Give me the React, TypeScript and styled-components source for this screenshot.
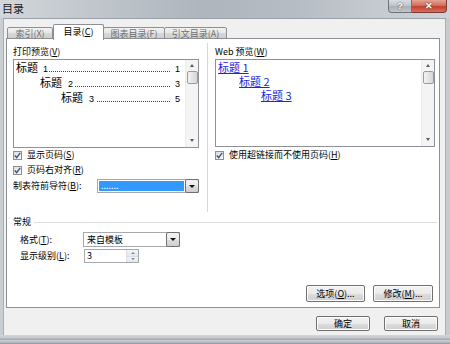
import React from 'react';
import styled, { createGlobalStyle } from 'styled-components';

const GlobalStyle = createGlobalStyle`
  html, body { margin: 0; padding: 0; background: #fff; }
  body {
    width: 450px; height: 344px; overflow: hidden;
    font-family: "Noto Sans CJK SC", "Liberation Sans", sans-serif;
    color: #000;
  }
  * { box-sizing: border-box; }
`;

const Window = styled.div`
  width: 450px;
  height: 344px;
  display: flex;
  flex-direction: column;
  background: linear-gradient(90deg, #c9ced3 0%, #bcc2c8 50%, #c6cbd0 100%);
`;

const TitleBar = styled.div`
  height: 18px;
  flex: none;
  display: flex;
  align-items: flex-start;
  padding-left: 2px;
  padding-right: 3px;
  background: linear-gradient(90deg, #d3d7db 0%, #c2c8ce 18%, #aeb5bc 45%, #b6bcc3 65%, #c6cbd1 85%, #cfd3d7 100%);
`;

const TitleText = styled.div`
  font-size: 11px;
  line-height: 17px;
  color: #1a1a1a;
`;

const CaptionButtons = styled.div`
  margin-left: auto;
  display: flex;
`;

const CaptionButton = styled.div<{ $close?: boolean }>`
  width: ${p => (p.$close ? 35 : 24)}px;
  height: 13px;
  display: flex;
  align-items: center;
  justify-content: center;
  border: 1px solid ${p => (p.$close ? '#7a3a33' : '#6c737b')};
  border-top: none;
  border-left-width: ${p => (p.$close ? 0 : 1)}px;
  border-radius: ${p => (p.$close ? '0 0 4px 0' : '0 0 0 4px')};
  background: ${p =>
    p.$close
      ? 'linear-gradient(180deg, #e4a493 0%, #d2705e 45%, #c2412d 55%, #d7705c 100%)'
      : 'linear-gradient(180deg, #d9dde1 0%, #c0c6cc 45%, #aab1b8 55%, #bfc5cb 100%)'};
  color: #fff;
  font-family: "Liberation Sans", sans-serif;
  font-weight: bold;
  font-size: 9px;
  line-height: 1;
  text-shadow: 0 0 2px #333;
`;

const Client = styled.div`
  margin-left: 3px;
  width: 443px;
  height: 317px;
  flex: none;
  background: #f0f0f0;
  border-top: 1px solid #9aa1a8;
  border-left: 1px solid #a8aeb4;
  border-right: 1px solid #a8aeb4;
  padding: 5px 7px 0 2px;
  display: flex;
  flex-direction: column;
`;

const BottomFrame = styled.div`
  flex: 1;
  background: linear-gradient(180deg, #d2d6da 0%, #c3c8cd 35%, #969da4 45%, #c9cdd2 60%, #b9bfc5 80%, #8d949b 100%);
`;

const TabStrip = styled.div`
  display: flex;
  align-items: flex-end;
  height: 15px;
  padding-left: 1px;
  position: relative;
  z-index: 1;
`;

const Tab = styled.div<{ $active?: boolean; $w: number }>`
  width: ${p => p.$w}px;
  height: ${p => (p.$active ? 16 : 12)}px;
  margin-bottom: ${p => (p.$active ? -1 : 0)}px;
  border: 1px solid #8c8f96;
  border-bottom: ${p => (p.$active ? 'none' : '1px solid #8c8f96')};
  margin-left: ${p => (p.$active ? 0 : -1)}px;
  border-radius: 2px 2px 0 0;
  background: ${p => (p.$active ? '#ffffff' : 'linear-gradient(180deg, #f2f2f2 0%, #e6e6e6 50%, #d8d8d8 51%, #cfcfcf 100%)')};
  color: ${p => (p.$active ? '#000' : '#6f6f6f')};
  font-size: 9px;
  line-height: ${p => (p.$active ? 14 : 11)}px;
  text-align: center;
  white-space: nowrap;
  &:first-child { margin-left: 0; }
`;

const Panel = styled.div`
  width: 434px;
  height: 270px;
  margin-top: -1px;
  border: 1px solid #8c8f96;
  background: #ffffff;
  padding: 7px 4px 5px 6px;
  display: flex;
  flex-direction: column;
`;

const TopSection = styled.div`
  height: 166px;
  display: flex;
  flex: none;
`;

const Column = styled.div<{ $w: number }>`
  width: ${p => p.$w}px;
  display: flex;
  flex-direction: column;
`;

const VSeparator = styled.div`
  width: 1px;
  margin: -3px 7px 0 8px;
  background: #d8d8d8;
`;

const Label = styled.div`
  height: 13px;
  font-size: 9px;
  line-height: 12px;
  white-space: nowrap;
`;

const Mn = styled.span`
  text-decoration: underline;
`;

const PreviewBox = styled.div<{ $h: number }>`
  height: ${p => p.$h}px;
  border: 1px solid #8e9298;
  background: #fff;
  display: flex;
  flex: none;
`;

const PreviewContent = styled.div<{ $pr: number }>`
  flex: 1;
  min-width: 0;
  padding: 0 ${p => p.$pr}px 0 1px;
`;

const PrintLine = styled.div<{ $indent: number }>`
  height: 15px;
  display: flex;
  align-items: baseline;
  padding-left: ${p => p.$indent}px;
  font-size: 11px;
  line-height: 15px;
  white-space: nowrap;
`;

const Small = styled.span<{ $gap?: number }>`
  font-family: "Liberation Sans", sans-serif;
  font-size: 9px;
  flex: none;
  margin-left: ${p => p.$gap ?? 0}px;
`;

const Leader = styled.span<{ $gap: number }>`
  flex: 1 1 0;
  min-width: 0;
  height: 1px;
  margin-left: ${p => p.$gap}px;
  margin-right: 4px;
  background-image: linear-gradient(90deg, #444 1px, transparent 1px);
  background-size: 2px 1px;
  background-repeat: repeat-x;
`;

const WebLine = styled.div<{ $indent: number }>`
  height: 14px;
  padding-left: ${p => p.$indent}px;
  font-size: 11px;
  line-height: 14px;
  white-space: nowrap;
`;

const Link = styled.span`
  color: #2424dc;
  text-decoration: underline;
`;

const Scrollbar = styled.div`
  width: 13px;
  flex: none;
  background: #f4f4f4;
  border-left: 1px solid #ececec;
  display: flex;
  flex-direction: column;
  align-items: center;
  padding: 4px 0 5px;
`;

const Arrow = styled.div<{ $down?: boolean }>`
  width: 0; height: 0;
  border-left: 2.5px solid transparent;
  border-right: 2.5px solid transparent;
  ${p => (p.$down ? 'border-top: 3px solid #5a5a5a;' : 'border-bottom: 3px solid #5a5a5a;')}
  ${p => (p.$down ? 'margin-top: auto;' : '')}
`;

const Thumb = styled.div`
  width: 11px;
  height: 13px;
  margin-top: 4px;
  border: 1px solid #9b9b9b;
  border-radius: 2px;
  background: linear-gradient(90deg, #f3f3f3 0%, #e4e4e4 50%, #d6d6d6 100%);
`;

const CheckRow = styled.div<{ $mt: number }>`
  height: 12px;
  margin-top: ${p => p.$mt}px;
  display: flex;
  align-items: center;
  font-size: 9px;
  line-height: 12px;
  white-space: nowrap;
  flex: none;
`;

const CheckBox = styled.span`
  width: 9px;
  height: 9px;
  margin-right: 5px;
  border: 1px solid #8f8f8f;
  background: linear-gradient(135deg, #dedede 0%, #f8f8f8 100%);
  display: flex;
  align-items: center;
  justify-content: center;
  flex: none;
`;

const FieldRow = styled.div<{ $mt: number; $h: number; $indent?: number }>`
  height: ${p => p.$h}px;
  margin-top: ${p => p.$mt}px;
  padding-left: ${p => p.$indent ?? 0}px;
  display: flex;
  align-items: center;
  flex: none;
`;

const FieldLabel = styled.div<{ $w: number }>`
  width: ${p => p.$w}px;
  font-size: 9px;
  line-height: 12px;
  white-space: nowrap;
  flex: none;
`;

const Combo = styled.div<{ $w: number }>`
  width: ${p => p.$w}px;
  height: 100%;
  border: 1px solid #a5a9ae;
  background: #fff;
  display: flex;
  padding: 1px 0 1px 1px;
`;

const ComboValue = styled.div<{ $selected?: boolean }>`
  flex: 1;
  display: flex;
  align-items: center;
  background: ${p => (p.$selected ? '#3399ff' : 'transparent')};
  color: ${p => (p.$selected ? '#fff' : '#000')};
  font-size: 9px;
  line-height: 10px;
  padding-left: 2px;
  white-space: nowrap;
`;

const DropButton = styled.div`
  width: 14px;
  margin: -2px -1px -2px 1px;
  border: 1px solid #707070;
  border-radius: 2px;
  background: linear-gradient(180deg, #f2f2f2 0%, #ebebeb 50%, #dddddd 51%, #cfcfcf 100%);
  display: flex;
  align-items: center;
  justify-content: center;
`;

const DropArrow = styled.div`
  width: 0; height: 0;
  border-left: 3px solid transparent;
  border-right: 3px solid transparent;
  border-top: 3px solid #111;
`;

const Spin = styled.div<{ $w: number }>`
  width: ${p => p.$w}px;
  height: 100%;
  border: 1px solid #a5a9ae;
  background: #fff;
  display: flex;
`;

const SpinValue = styled.div`
  flex: 1;
  font-size: 9px;
  line-height: 12px;
  padding-left: 2px;
`;

const SpinButtons = styled.div`
  width: 12px;
  display: flex;
  flex-direction: column;
  border-left: 1px solid #d8dde3;
`;

const SpinHalf = styled.div<{ $down?: boolean }>`
  flex: 1;
  display: flex;
  align-items: center;
  justify-content: center;
  background: linear-gradient(180deg, #f3f5f8 0%, #e3e8ee 100%);
  border-bottom: ${p => (p.$down ? 'none' : '1px solid #d6dbe1')};
`;

const SpinArrow = styled.div<{ $down?: boolean }>`
  width: 0; height: 0;
  border-left: 2.5px solid transparent;
  border-right: 2.5px solid transparent;
  ${p => (p.$down ? 'border-top: 2.5px solid #7d8a99;' : 'border-bottom: 2.5px solid #7d8a99;')}
`;

const GroupHeader = styled.div`
  height: 12px;
  margin-top: 4px;
  display: flex;
  align-items: center;
  font-size: 9px;
  line-height: 12px;
  flex: none;
`;

const GroupLine = styled.div`
  flex: 1;
  height: 1px;
  margin-left: 3px;
  margin-right: -2px;
  background: #dcdcdc;
`;

const ButtonRow = styled.div<{ $gap: number; $pr: number; $h: number }>`
  margin-top: auto;
  height: ${p => p.$h}px;
  display: flex;
  justify-content: flex-end;
  gap: ${p => p.$gap}px;
  padding-right: ${p => p.$pr}px;
  flex: none;
`;

const DialogButtons = styled(ButtonRow)`
  margin-top: 8px;
`;

const Button = styled.div<{ $w: number }>`
  width: ${p => p.$w}px;
  height: 100%;
  border: 1px solid #707070;
  border-radius: 2px;
  background: linear-gradient(180deg, #f2f2f2 0%, #ebebeb 50%, #dddddd 51%, #cfcfcf 100%);
  box-shadow: inset 0 0 0 1px #fcfcfc;
  display: flex;
  align-items: center;
  justify-content: center;
  font-size: 9px;
  line-height: 12px;
  white-space: nowrap;
`;

const Check = () => (
  <CheckBox>
    <svg width="7" height="7" viewBox="0 0 7 7">
      <path d="M0.8 3.6 L2.7 5.6 L6.2 0.9" fill="none" stroke="#3d5287" strokeWidth="1.4" />
    </svg>
  </CheckBox>
);

export default function App() {
  return (
    <>
      <GlobalStyle />
      <Window>
        <TitleBar>
          <TitleText>目录</TitleText>
          <CaptionButtons>
            <CaptionButton>?</CaptionButton>
            <CaptionButton $close>✕</CaptionButton>
          </CaptionButtons>
        </TitleBar>
        <Client>
          <TabStrip>
            <Tab $w={46}>索引(X)</Tab>
            <Tab $w={51} $active>目录(<Mn>C</Mn>)</Tab>
            <Tab $w={62}>图表目录(F)</Tab>
            <Tab $w={63}>引文目录(A)</Tab>
          </TabStrip>
          <Panel>
            <TopSection>
              <Column $w={186}>
                <Label>打印预览(<Mn>V</Mn>)</Label>
                <PreviewBox $h={89}>
                  <PreviewContent $pr={5}>
                    <PrintLine $indent={1}>
                      标题<Small $gap={5}>1</Small>
                      <Leader $gap={1} />
                      <Small>1</Small>
                    </PrintLine>
                    <PrintLine $indent={25}>
                      标题<Small $gap={6}>2</Small>
                      <Leader $gap={2} />
                      <Small>3</Small>
                    </PrintLine>
                    <PrintLine $indent={46}>
                      标题<Small $gap={6}>3</Small>
                      <Leader $gap={3} />
                      <Small>5</Small>
                    </PrintLine>
                  </PreviewContent>
                  <Scrollbar>
                    <Arrow />
                    <Thumb />
                    <Arrow $down />
                  </Scrollbar>
                </PreviewBox>
                <CheckRow $mt={1}>
                  <Check />显示页码(<Mn>S</Mn>)
                </CheckRow>
                <CheckRow $mt={3}>
                  <Check />页码右对齐(<Mn>R</Mn>)
                </CheckRow>
                <FieldRow $mt={3} $h={14}>
                  <FieldLabel $w={84}>制表符前导符(<Mn>B</Mn>):</FieldLabel>
                  <Combo $w={102}>
                    <ComboValue $selected>.......</ComboValue>
                    <DropButton><DropArrow /></DropButton>
                  </Combo>
                </FieldRow>
              </Column>
              <VSeparator />
              <Column $w={220}>
                <Label>Web 预览(<Mn>W</Mn>)</Label>
                <PreviewBox $h={88}>
                  <PreviewContent $pr={0}>
                    <WebLine $indent={1}><Link>标题 1</Link></WebLine>
                    <WebLine $indent={22}><Link>标题 2</Link></WebLine>
                    <WebLine $indent={44}><Link>标题 3</Link></WebLine>
                  </PreviewContent>
                  <Scrollbar>
                    <Arrow />
                    <Thumb />
                    <Arrow $down />
                  </Scrollbar>
                </PreviewBox>
                <CheckRow $mt={2}>
                  <Check />使用超链接而不使用页码(<Mn>H</Mn>)
                </CheckRow>
              </Column>
            </TopSection>
            <GroupHeader>
              常规
              <GroupLine />
            </GroupHeader>
            <FieldRow $mt={4} $h={15} $indent={7}>
              <FieldLabel $w={63}>格式(<Mn>T</Mn>):</FieldLabel>
              <Combo $w={97}>
                <ComboValue>来自模板</ComboValue>
                <DropButton><DropArrow /></DropButton>
              </Combo>
            </FieldRow>
            <FieldRow $mt={2} $h={14} $indent={7}>
              <FieldLabel $w={64}>显示级别(<Mn>L</Mn>):</FieldLabel>
              <Spin $w={55}>
                <SpinValue>3</SpinValue>
                <SpinButtons>
                  <SpinHalf><SpinArrow /></SpinHalf>
                  <SpinHalf $down><SpinArrow $down /></SpinHalf>
                </SpinButtons>
              </Spin>
            </FieldRow>
            <ButtonRow $gap={8} $pr={2} $h={17}>
              <Button $w={59}>选项(<Mn>O</Mn>)...</Button>
              <Button $w={60}>修改(<Mn>M</Mn>)...</Button>
            </ButtonRow>
          </Panel>
          <DialogButtons $gap={14} $pr={0} $h={15}>
            <Button $w={54}>确定</Button>
            <Button $w={54}>取消</Button>
          </DialogButtons>
        </Client>
        <BottomFrame />
      </Window>
    </>
  );
}
